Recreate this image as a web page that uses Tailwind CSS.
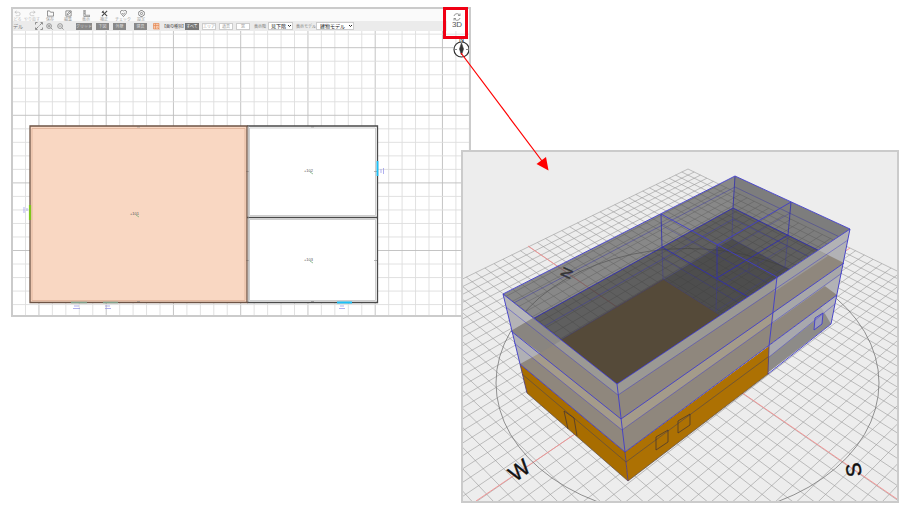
<!DOCTYPE html>
<html lang="ja">
<head>
    <meta charset="utf-8" />
    <meta name="viewport" content="width=device-width, initial-scale=1" />
    <title>3D表示</title>
    <script src="https://cdn.jsdelivr.net/npm/@tailwindcss/browser@4"></script>
</head>
<body class="bg-white font-['Noto_Sans_CJK_JP',sans-serif]">
    <main class="relative min-h-screen overflow-hidden">

        <!-- Floor plan window -->
        <section class="absolute left-[11px] top-[7px] w-[460px] border-2 border-[#cbcbcb] bg-white">
            <div class="flex">
                <div class="flex-1 min-w-0">
                    <nav class="flex h-3 pt-px bg-[#fafafa] overflow-hidden text-[4px] leading-[4px] text-[#999]">
                        <button class="w-[9px] flex flex-col items-center shrink-0 text-[#bbb]">
                            <svg class="w-[7px] h-[7px]" viewBox="0 0 16 16" fill="none" stroke="currentColor" stroke-width="1.5"><path d="M6 2L2 5l4 3M2 5h8a4 4 0 0 1 0 8H4" /></svg>
                            <span class="whitespace-nowrap">どる</span>
                        </button>
                        <button class="w-[18px] ml-px flex flex-col items-center shrink-0 text-[#bbb]">
                            <svg class="w-[7px] h-[7px]" viewBox="0 0 16 16" fill="none" stroke="currentColor" stroke-width="1.5"><path d="M10 2l4 3-4 3M14 5H6a4 4 0 0 0 0 8h6" /></svg>
                            <span class="whitespace-nowrap">やり直す</span>
                        </button>
                        <button class="w-[18px] flex flex-col items-center shrink-0">
                            <svg class="w-[7px] h-[7px]" viewBox="0 0 16 16" fill="none" stroke="#666" stroke-width="1.6"><path d="M1 14V2h5l2 3h7v9z" /></svg>
                            <span>保存</span>
                        </button>
                        <button class="w-[18px] flex flex-col items-center shrink-0">
                            <svg class="w-[7px] h-[7px]" viewBox="0 0 16 16" fill="none" stroke="#666" stroke-width="1.6"><path d="M2 2h12v12H2zM5 11l1-3 6-6M5 11l3-1 6-6" /></svg>
                            <span>編集</span>
                        </button>
                        <button class="w-[18px] flex flex-col items-center shrink-0">
                            <svg class="w-[7px] h-[7px]" viewBox="0 0 16 16" fill="none" stroke="#777" stroke-width="1.6"><path d="M2 0v15h14v-3H5V0zM2 4h2M2 8h2" /></svg>
                            <span>表示</span>
                        </button>
                        <button class="w-[18px] flex flex-col items-center shrink-0">
                            <svg class="w-[7px] h-[7px]" viewBox="0 0 16 16" fill="none" stroke="#444" stroke-width="2.4"><path d="M3 3l11 11M2 6l4-4M14 2l-5 5M7 9l-5 5" /></svg>
                            <span>補正</span>
                        </button>
                        <button class="w-5 flex flex-col items-center shrink-0">
                            <svg class="w-[7px] h-[7px]" viewBox="0 0 16 16" fill="none" stroke="#666" stroke-width="1.6"><path d="M8 15L2 8a4 4 0 0 1 6-6 4 4 0 0 1 6 6zM5 7l3 3 3-4" /></svg>
                            <span class="whitespace-nowrap">チェック</span>
                        </button>
                        <button class="w-4 flex flex-col items-center shrink-0">
                            <svg class="w-[7px] h-[7px]" viewBox="0 0 16 16" fill="none" stroke="#666" stroke-width="1.6"><circle cx="8" cy="8" r="2.5" /><path d="M6 1h4l1 2 3 1 1 4-1 4-3 1-1 2H6l-1-2-3-1-1-4 1-4 3-1z" /></svg>
                            <span>設定</span>
                        </button>
                    </nav>
                    <div class="flex items-center h-[10px] bg-[#ebebeb] text-[4px] leading-[4px] text-[#777] whitespace-nowrap">
                        <span class="w-[22px] text-[5px] shrink-0">デル</span>
                        <svg class="w-2 h-2 shrink-0" viewBox="0 0 16 16" fill="none" stroke="#777" stroke-width="1.6"><path d="M1 5V1h4M11 1h4v4M15 11v4h-4M5 15H1v-4M9 7l5-5M7 9l-5 5" /></svg>
                        <svg class="w-[7px] h-[7px] shrink-0 ml-[3px]" viewBox="0 0 16 16" fill="none" stroke="#777" stroke-width="1.6"><circle cx="7" cy="7" r="5.5" /><path d="M11 11l4 4M4 7h6M7 4v6" /></svg>
                        <svg class="w-[7px] h-[7px] shrink-0 ml-[4px]" viewBox="0 0 16 16" fill="none" stroke="#777" stroke-width="1.6"><circle cx="7" cy="7" r="5.5" /><path d="M11 11l4 4M4 7h6" /></svg>
                        <button class="ml-[12px] w-4 h-[7px] bg-[#888] text-[#ddd] shrink-0">グリッド</button>
                        <button class="ml-1 w-[13px] h-[7px] bg-[#888] text-[#ddd] shrink-0">下図</button>
                        <button class="ml-1 w-[13px] h-[7px] bg-[#888] text-[#ddd] shrink-0">外壁</button>
                        <button class="ml-2 w-[13px] h-[7px] bg-[#888] text-[#ddd] shrink-0">建具</button>
                        <svg class="w-[7px] h-[7px] shrink-0 ml-[6px]" viewBox="0 0 14 14" fill="#f6c9ae" stroke="#e58a55" stroke-width="1.4"><path d="M1 1h11v11H1zM1 5h11M5 1v11M9 9l4 4" /></svg>
                        <span class="w-[22px] ml-[2px] text-[4px] text-[#444] shrink-0">【面の種別】</span>
                        <button class="ml-px w-[14px] h-[7px] bg-[#777] text-white shrink-0">すべて</button>
                        <button class="ml-[3px] w-[14px] h-[7px] border border-[#ccc] bg-white text-[#999] flex items-center justify-center shrink-0">エリア</button>
                        <button class="ml-[3px] w-[14px] h-[7px] border border-[#ccc] bg-white text-[#999] flex items-center justify-center shrink-0">道具</button>
                        <button class="ml-[3px] w-[14px] h-[7px] border border-[#ccc] bg-white text-[#999] flex items-center justify-center shrink-0">窓</button>
                        <label for="floor" class="w-[14px] ml-1 shrink-0">表示階</label>
                        <div class="relative w-[25px] shrink-0">
                            <select id="floor" class="block appearance-none w-full h-2 pl-[2px] border border-[#ccc] bg-white text-[5px] leading-[6px] text-[#222]"><option>見下階</option></select>
                            <svg class="absolute right-[2px] top-[3px] w-[3px] h-[2px]" viewBox="0 0 6 4" fill="none" stroke="#222" stroke-width="2"><path d="M0 0l3 3 3-3" /></svg>
                        </div>
                        <label for="model" class="w-5 ml-[3px] shrink-0">表示モデル</label>
                        <div class="relative w-[38px] shrink-0">
                            <select id="model" class="block appearance-none w-full h-2 pl-[3px] border border-[#ccc] bg-white text-[5px] leading-[6px] text-[#222]"><option>建物モデル</option></select>
                            <svg class="absolute right-[2px] top-[3px] w-[3px] h-[2px]" viewBox="0 0 6 4" fill="none" stroke="#222" stroke-width="2"><path d="M0 0l3 3 3-3" /></svg>
                        </div>
                    </div>
                </div>
                <button class="w-[20px] mr-[2px] bg-white flex flex-col items-center text-[8px] leading-[8px] text-[#555] font-['Liberation_Sans',sans-serif]">
                    <svg class="w-2 h-2 mt-[4px] shrink-0" viewBox="0 0 16 16" fill="none" stroke="#777" stroke-width="1.5"><path d="M2 6a6 6 0 0 1 10-3l2 2M14 1v4h-4M14 10a6 6 0 0 1-10 3l-2-2M2 15v-4h4" /></svg>
                    <span>3D</span>
                </button>
            </div>
            <svg id="plan" class="block w-full" viewBox="13 31 456 284" fill="none">
                <g id="planGrid"></g>
                <rect x="30" y="126" width="347.5" height="176.5" fill="#fff" />
                <rect x="30" y="126" width="217" height="176.5" fill="#f9d7c2" />
                <g stroke="#b9b9b9" stroke-width=".7">
                    <path d="M249.500 128H375.500V215.500H249.500zM249.500 219.500H375.500V300.500H249.500z" />
                    <path d="M32 128.500H245V300.500H32z" stroke="#d9a98f" />
                    <path d="M137 127h3M137 301.500h3M311 127h3M311 217.500h3M311 301.500h3M246 171.500h3M246 260.500h3M374 171.500h3M374 260.500h3" stroke="#999" />
                </g>
                <path d="M247 126H377.500V302.500H247M247 217.500H377.500" stroke="#4a4a4a" stroke-width="1.3" />
                <path d="M30 126H247V302.500H30z" stroke="#6e5446" stroke-width="1.3" />
                <path d="M248.500 126V302" stroke="#999" stroke-width=".6" />
                <path d="M30 205v15" stroke="#7fc41c" stroke-width="2.200" />
                <path d="M71 302.500h16M103 302.500h15" stroke="#7fa08a" stroke-width="1.300" />
                <path d="M377.500 161v15M337 302.500h15" stroke="#1cc0f7" stroke-width="1.800" />
                <path d="M24 207v6M27 208v3M74 306h5M73 308.500h7M105 306h5M105 308.500h6M340 306h4M339 308.500h6M381 169v4M383.500 168v6" stroke="#8f8fe8" stroke-width=".7" />
                <g fill="#555" font-size="4" font-family="Liberation Sans, sans-serif">
                    <text x="130" y="215">+101</text>
                    <text x="304" y="172">+102</text>
                    <text x="304" y="261">+103</text>
                </g>
                <path d="M136 215l3 2M310 172l3 2M310 261l3 2" stroke="#69a873" stroke-width=".7" />
                <g stroke="#333">
                    <circle cx="461.500" cy="49.500" r="7.500" fill="#fff" stroke-width="1.200" />
                    <path d="M461.500 43l2 6-2 6-2-6z" fill="#333" stroke-width=".6" />
                    <path d="M455 49.500h2M466 49.500h2" stroke-width=".6" />
                </g>
                <text x="459" y="42" fill="#222" font-size="7" font-family="Liberation Sans, sans-serif">N</text>
            </svg>
        </section>

        <!-- 3D view window -->
        <section class="absolute left-[461px] top-[150px] w-[438px] border-2 border-[#cbcbcb] bg-[#ededed]">
            <svg id="view" class="block w-full" viewBox="463 152 434 349" fill="none">
                <defs>
                    <clipPath id="inside"><path d="M503 294L735 176 850 229 617 384z" /></clipPath>
                    <clipPath id="walls"><path d="M503 294L617 384 850 229 831 324 628 481 527 393z" /></clipPath>
                </defs>
                <g id="ground" stroke="#999" stroke-width=".6"></g>
                <path d="M528 246L897 499M476 501L850 248" stroke="#f58f8f" stroke-width=".9" />
                <ellipse cx="687.500" cy="383" rx="191.500" ry="134.500" stroke="#777" stroke-width=".8" />
                <g fill="#111" stroke="#111" stroke-width=".4" font-family="Liberation Sans, sans-serif" text-anchor="middle">
                    <text font-size="15" transform="translate(567 273) rotate(-66)" y="5">N</text>
                    <text font-size="22" transform="translate(519 470) rotate(-36)" y="8">W</text>
                    <text font-size="21" transform="translate(853 470) rotate(-100)" y="8">S</text>
                </g>

                <!-- Inner faces seen through the open top -->
                <g clip-path="url(#inside)">
                    <path d="M503 294L735 176 850 229 617 384z" fill="#4b4b4b" fill-opacity=".62" />
                    <path d="M735 176L850 229V270L733 208z" fill="#333" fill-opacity=".12" />
                    <path d="M511 331L733 208 844 263 621 419z" fill="#333" fill-opacity=".48" />
                    <path d="M520 364L732 239 837 295 625 452z" fill="#3c3c3c" fill-opacity=".5" />
                    <path d="M520 364L663 279 769 346 625 452z" fill="#554a39" />
                    <g stroke="#3a38a0" stroke-width=".6" stroke-opacity=".8">
                        <path d="M506 307L735 187 848 241M515 343L733 219 842 273" />
                        <path d="M661 225L777 288M717 256L790 213M662 258L772 322M716 289L787 246" stroke-opacity=".6" />
                        <path d="M520 364L732 239 837 295M663 279L769 346M716 311L785 267" stroke-opacity=".5" />
                        <path d="M662 247L663 279M733 208L732 239M717 278L716 311M788 235L785 267" stroke-opacity=".7" />
                        <path d="M749 264l9-5v11M749 264v8" stroke="#3f3f60" />
                    </g>
                    <path d="M511 331L733 208 844 263M662 247L774 312M717 278L788 235" stroke="#302dae" stroke-width=".9" />
                    <path d="M735 176L733 208M661 214L662 247M717 245V278M791 202L788 235" stroke="#302dae" stroke-width=".8" />
                </g>

                <!-- Outer walls -->
                <g clip-path="url(#walls)">
                    <path d="M503 294L617 384 850 229 837 295 625 452 520 364z" fill="#8f877d" />
                    <path d="M503 294L617 384 850 229 848 240 618 395 506 307z" fill="#9b9994" />
                    <path d="M511 331L621 419 844 263 842 273 622 430 514 343z" fill="#a49b8a" />
                    <path d="M503 294L533 318 511 331z" fill="#bbbbbf" fill-opacity=".85" />
                    <path d="M511 331L533 318 562 340 540 353z" fill="#858482" fill-opacity=".6" />
                    <path d="M511 331L540 353 520 364z" fill="#b0b0b5" />
                    <path d="M850 229L818 250 844 263z" fill="#b2b2b5" />
                    <path d="M844 263L818 281 837 295z" fill="#b2b2b5" />
                    <path d="M777 277L818 250 828 256 774 292z" fill="#a3a3a5" fill-opacity=".7" />
                    <path d="M774 312L844 263 842 274 773 323z" fill="#a7a7a9" />
                    <path d="M837 295L769 346 768 375 831 324z" fill="#8d8b88" />
                    <path d="M837 295L769 346 769 357 835 305z" fill="#a8a8ad" />
                    <path d="M837 295L821 307 831 324z" fill="#b4b4b9" />
                </g>
                <path d="M520 364L625 452 628 481 527 393z" fill="#a86d00" />
                <path d="M625 452L769 346 768 374 628 481z" fill="#ad7103" />
                <g stroke="#5a4a48" stroke-width=".7">
                    <path d="M522 374L626 462 768 357M527 393L628 481 768 374" />
                    <path d="M568 429L564 411 574 418 577 436M656 437L668 430V442L656 450zM678 421L690 414V425L678 433z" stroke="#3d3138" />
                </g>
                <g stroke="#3f3ccb" stroke-width=".9">
                    <path d="M503 294L735 176 850 229 617 384z" />
                    <path d="M511 331L621 419 844 263M520 364L625 452 837 295M768 374L831 324" />
                    <path d="M503 294L520 364M617 384L625 452M850 229L831 324M777 277L769 346M661 214L777 277M717 245L791 202" />
                    <path d="M520 364L527 393M625 452L628 481M769 346L768 374" stroke="#54407a" />
                    <path d="M815 318L823 313 822 324 814 330z" fill="#9a9ab8" />
                    <path d="M506 307L618 395 848 240M514 343L622 430 842 273M769 357L835 304" stroke-width=".6" stroke-opacity=".8" />
                </g>
            </svg>
        </section>

        <!-- 3D button callout -->
        <div class="absolute left-[443px] top-[7px] w-[25px] h-8 border-[3px] border-[#f00014] pointer-events-none"></div>
        <svg class="absolute left-[455px] top-[45px] w-[100px] h-[130px] pointer-events-none" viewBox="455 45 100 130">
            <path d="M461 53L542 161" stroke="#f00" stroke-width="1.200" />
            <path d="M548.500 170.500L536.500 164 546 157z" fill="#f00" />
        </svg>
    </main>

    <script>
        function addPath(parent, d, stroke, width) {
            const p = document.createElementNS('http://www.w3.org/2000/svg', 'path');
            p.setAttribute('d', d);
            if (stroke) p.setAttribute('stroke', stroke);
            if (width) p.setAttribute('stroke-width', width);
            document.getElementById(parent).appendChild(p);
        }

        // Plan grid, every fifth line is darker
        for (let i = -6; i <= 27; i++) {
            const x = 106.2 + i * 13.45;
            addPath('planGrid', `M${x} 31V316`, i % 5 ? '#dedede' : '#bdbdbd', 0.9);
        }
        for (let i = -1; i <= 20; i++) {
            const y = 47.7 + i * 13.52;
            addPath('planGrid', `M12 ${y}H470`, i % 5 ? '#dedede' : '#bdbdbd', 0.9);
        }

        // Ground point to screen
        function project(p, q) {
            const u = (p + q) / Math.SQRT2;
            const v = (p - q) / Math.SQRT2;
            const w = 1 + 0.2007 * v;
            return `${(688 + 187.6 * u / w).toFixed(1)} ${(-287 + 643 / w).toFixed(1)}`;
        }
        const half = 1.445;
        const cells = 22;
        for (let i = -cells; i <= cells; i++) {
            const t = i * half / cells;
            addPath('ground', `M${project(t, -half)}L${project(t, half)}`);
            addPath('ground', `M${project(-half, t)}L${project(half, t)}`);
        }
    </script>
</body>
</html>
